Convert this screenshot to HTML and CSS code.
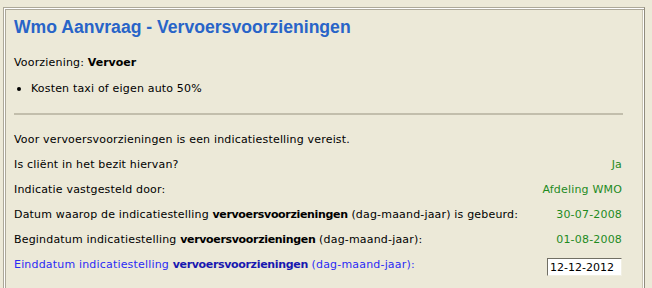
FILE: index.html
```html
<!DOCTYPE html>
<html>
<head>
<meta charset="utf-8">
<link rel="stylesheet" href="styles.css">
</head>
<body>
<div class="panel">
  <h1 class="title">Wmo Aanvraag - Vervoersvoorzieningen</h1>
  <div class="row r-voorz">Voorziening:&nbsp;<b>Vervoer</b></div>
  <div class="row bullet"><span class="dot"></span>Kosten taxi of eigen auto 50%</div>
  <div class="rule"></div>
  <div class="row r-first">Voor vervoersvoorzieningen is een indicatiestelling vereist.</div>
  <div class="row"><span class="label">Is cliënt in het bezit hiervan?</span><span class="value">Ja</span></div>
  <div class="row"><span class="label">Indicatie vastgesteld door:</span><span class="value">Afdeling WMO</span></div>
  <div class="row"><span class="label">Datum waarop de indicatiestelling <b>vervoersvoorzieningen</b> (dag-maand-jaar) is gebeurd:</span><span class="value">30-07-2008</span></div>
  <div class="row"><span class="label">Begindatum indicatiestelling <b>vervoersvoorzieningen</b> (dag-maand-jaar):</span><span class="value">01-08-2008</span></div>
  <div class="row tall edit"><span class="label">Einddatum indicatiestelling <b>vervoersvoorzieningen</b> (dag-maand-jaar):</span><input class="date" type="text" value="12-12-2012"></div>
</div>
</body>
</html>
```

FILE: styles.css
```css
html, body {
  margin: 0;
  padding: 0;
  background: #ECE9D8;
  height: 288px;
  overflow: hidden;
}
body {
  font-family: "DejaVu Sans", Verdana, sans-serif;
  font-size: 11px;
  letter-spacing: 0.18px;
  color: #000;
}
.panel {
  margin: 7px 0 0 3px;
  width: 608px;
  height: 290px;
  border: 1px solid #ACA899;
  border-right-color: #8f8b7d;
  box-shadow: inset 1px 1px 0 #fff, inset 2px 2px 0 #ACA899, inset -1px -1px 0 #fff, inset -2px -2px 0 #c9c5b3;
  padding: 0 22px 0 10px;
  box-sizing: content-box;
}
.title {
  margin: 0;
  padding-top: 8px;
  font-family: "Liberation Sans", Arial, sans-serif;
  font-size: 17.6px;
  letter-spacing: 0;
  line-height: 22px;
  font-weight: bold;
  color: #2864C8;
}
.row {
  display: flex;
  align-items: center;
  justify-content: space-between;
  height: 25px;
  white-space: nowrap;
}
.row b {
  font-weight: bold;
  letter-spacing: -0.33px;
}
.r-voorz {
  justify-content: flex-start;
  margin-top: 12px;
}
.r-voorz b {
  letter-spacing: 0;
}
.bullet {
  justify-content: flex-start;
  margin-top: 1px;
}
.dot {
  width: 4px;
  height: 4px;
  border-radius: 50%;
  background: #000;
  margin: 0 10px 0 3px;
}
.rule {
  height: 2px;
  background: #C2BEAC;
  margin: 12px 0 0 0;
  width: 609px;
}
.r-first {
  justify-content: flex-start;
  margin-top: 12px;
}
.tall {
  height: 25px;
}
.value {
  color: #1E8B1E;
}
.edit .label {
  color: #2B2BF5;
}
.edit .label b {
  color: #1818B0;
}
.date {
  align-self: flex-start;
  width: 75px;
  height: 18px;
  box-sizing: border-box;
  margin: 6px 0 0 0;
  padding: 0 2px;
  border: 1px solid #7F9DB9;
  border-top-color: #716F64;
  border-left-color: #716F64;
  border-right-color: #F1EFE2;
  border-bottom-color: #F1EFE2;
  background: #fff;
  font-family: "DejaVu Sans", Verdana, sans-serif;
  font-size: 11px;
  letter-spacing: 0;
  color: #000;
  outline: none;
}
```
